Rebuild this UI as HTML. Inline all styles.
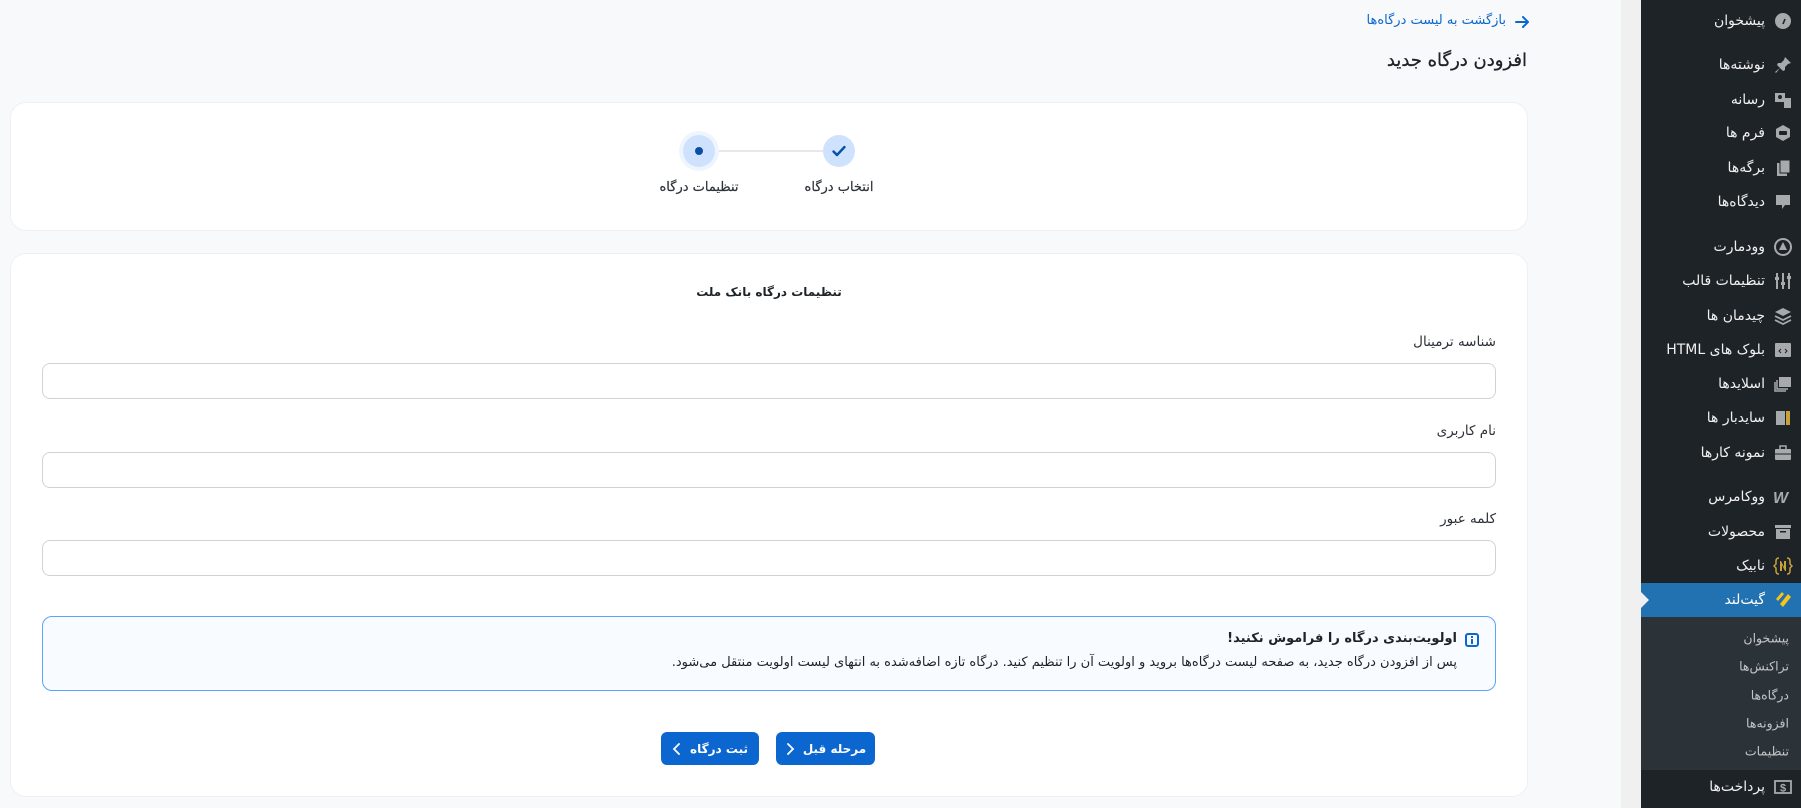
<!DOCTYPE html>
<html><head><meta charset="utf-8">
<style>
*{box-sizing:border-box;margin:0;padding:0}
body{width:1801px;height:808px;overflow:hidden;background:#f8f9fb;font-family:"DejaVu Sans","Liberation Sans",sans-serif;position:relative}
.a{position:absolute}
.r{direction:rtl;white-space:nowrap}
.card{position:absolute;left:10px;width:1518px;background:#fff;border:1px solid #eef0f3;border-radius:16px}
.inp{position:absolute;left:42px;width:1454px;height:36px;border:1px solid #cfd3d9;border-radius:8px;background:#fff}
.lbl{position:absolute;right:305px;font-size:13.5px;color:#2d3138;direction:rtl}
.side{position:absolute;left:1641px;top:0;width:160px;height:808px;background:#1d2327}
.it{position:absolute;right:36px;font-size:14px;color:#f0f0f1;direction:rtl;white-space:nowrap;transform:translateY(-50%)}
.ic{position:absolute;left:132px;width:20px;height:20px;transform:translateY(-50%)}
.sub{position:absolute;right:12px;font-size:12.5px;color:#c3c4c7;direction:rtl;white-space:nowrap;transform:translateY(-50%)}
.btn{position:absolute;top:732px;height:33px;background:#0b66d0;border-radius:6px;color:#fff;font-size:12px;font-weight:bold;display:flex;align-items:center;justify-content:center;gap:8px;direction:rtl}
</style></head><body>
<div class="a" style="left:1621px;top:0;width:20px;height:808px;background:#f0f0f1"></div>

<div class="a r" style="right:295px;top:13px;font-size:13px;color:#0b66d0">بازگشت به لیست درگاه‌ها</div>
<svg class="a" style="left:1514px;top:14px" width="16" height="16" viewBox="0 0 16 16"><path d="M2 8h12M9 3l5 5-5 5" stroke="#0b66d0" stroke-width="2" fill="none" stroke-linecap="round" stroke-linejoin="round"/></svg>
<div class="a r" style="right:274px;top:50px;font-size:18px;color:#1d2327;-webkit-text-stroke:0.3px #1d2327">افزودن درگاه جدید</div>

<div class="card" style="top:102px;height:129px"></div>
<div class="a" style="left:715px;top:150px;width:108px;height:2px;background:#e6e8ec"></div>
<div class="a" style="left:823px;top:135px;width:32px;height:32px;border-radius:50%;background:#cfe2fd"></div>
<svg class="a" style="left:831px;top:143px" width="16" height="16" viewBox="0 0 16 16"><path d="M2.5 8.5l3.5 3.5 7.5-8" stroke="#0a4fa3" stroke-width="2.4" fill="none" stroke-linecap="round" stroke-linejoin="round"/></svg>
<div class="a" style="left:679px;top:131px;width:40px;height:40px;border-radius:50%;background:#eef5ff"></div>
<div class="a" style="left:683px;top:135px;width:32px;height:32px;border-radius:50%;background:#cfe2fd"></div>
<div class="a" style="left:695px;top:147px;width:8px;height:8px;border-radius:50%;background:#0a4fa3"></div>
<div class="a r" style="left:779px;width:120px;text-align:center;top:180px;font-size:13px;color:#2d3138;-webkit-text-stroke:0.2px #2d3138">انتخاب درگاه</div>
<div class="a r" style="left:639px;width:120px;text-align:center;top:180px;font-size:13px;color:#2d3138;-webkit-text-stroke:0.2px #2d3138">تنظیمات درگاه</div>

<div class="card" style="top:253px;height:544px"></div>
<div class="a r" style="left:669px;width:200px;text-align:center;top:285px;font-size:12px;font-weight:bold;color:#1d2327">تنظیمات درگاه بانک ملت</div>
<div class="lbl" style="top:334px">شناسه ترمینال</div>
<div class="inp" style="top:363px"></div>
<div class="lbl" style="top:423px">نام کاربری</div>
<div class="inp" style="top:452px"></div>
<div class="lbl" style="top:511px">کلمه عبور</div>
<div class="inp" style="top:540px"></div>

<div class="a" style="left:42px;top:616px;width:1454px;height:75px;background:#f8fbff;border:1px solid #5ea3f5;border-radius:10px"></div>
<div class="a r" style="right:344px;top:631px;font-size:13px;font-weight:bold;color:#1d2327">اولویت‌بندی درگاه را فراموش نکنید!</div>
<div class="a r" style="right:344px;top:655px;font-size:13px;color:#1d2327">پس از افزودن درگاه جدید، به صفحه لیست درگاه‌ها بروید و اولویت آن را تنظیم کنید. درگاه تازه اضافه‌شده به انتهای لیست اولویت منتقل می‌شود.</div>
<div class="a" style="left:1465px;top:633px;width:14px;height:14px;border:2px solid #0b66d0;border-radius:3px"></div>
<div class="a" style="left:1471px;top:636px;width:2px;height:2px;background:#0b66d0"></div>
<div class="a" style="left:1471px;top:639px;width:2px;height:5px;background:#0b66d0"></div>

<div class="btn" style="left:776px;width:99px">
<svg width="10" height="12" viewBox="0 0 10 12" style="order:2"><path d="M3 1l5 5-5 5" stroke="#fff" stroke-width="1.8" fill="none" stroke-linecap="round"/></svg>
<span>مرحله قبل</span></div>
<div class="btn" style="left:661px;width:98px">
<span>ثبت درگاه</span>
<svg width="10" height="12" viewBox="0 0 10 12"><path d="M7 1L2 6l5 5" stroke="#fff" stroke-width="1.8" fill="none" stroke-linecap="round"/></svg></div>

<div class="side">
<div class="it" style="top:21px">پیشخوان</div>
<div class="it" style="top:65px">نوشته‌ها</div>
<div class="it" style="top:100px">رسانه</div>
<div class="it" style="top:133px">فرم ها</div>
<div class="it" style="top:168px">برگه‌ها</div>
<div class="it" style="top:202px">دیدگاه‌ها</div>
<div class="it" style="top:247px">وودمارت</div>
<div class="it" style="top:281px">تنظیمات قالب</div>
<div class="it" style="top:316px">چیدمان ها</div>
<div class="it" style="top:350px">بلوک های HTML</div>
<div class="it" style="top:384px">اسلایدها</div>
<div class="it" style="top:418px">سایدبار ها</div>
<div class="it" style="top:453px">نمونه کارها</div>
<div class="it" style="top:497px">ووکامرس</div>
<div class="it" style="top:532px">محصولات</div>
<div class="it" style="top:566px">نابیک</div>
<div class="a" style="left:0;top:583px;width:160px;height:34px;background:#2271b1"></div>
<div class="a" style="left:0;top:592px;width:0;height:0;border-top:8px solid transparent;border-bottom:8px solid transparent;border-left:8px solid #f0f0f1"></div>
<div class="it" style="top:600px;color:#fff">گیت‌لند</div>
<div class="a" style="left:0;top:617px;width:160px;height:153px;background:#2c3338"></div>
<div class="sub" style="top:638px">پیشخوان</div>
<div class="sub" style="top:666px">تراکنش‌ها</div>
<div class="sub" style="top:695px">درگاه‌ها</div>
<div class="sub" style="top:723px">افزونه‌ها</div>
<div class="sub" style="top:751px">تنظیمات</div>
<div class="it" style="top:787px">پرداخت‌ها</div>

<svg class="ic" style="top:21px" viewBox="0 0 20 20"><circle cx="10" cy="10" r="8" fill="#a7aaad"/><path d="M10 13l2-5" stroke="#1d2327" stroke-width="1.6"/></svg>
<svg class="ic" style="top:65px" viewBox="0 0 20 20"><path d="M12 2l6 6-3 1-3 3 0 3-2 1-3-3-4 5-1-1 5-4-3-3 1-2 3 0 3-3z" fill="#a7aaad"/></svg>
<svg class="ic" style="top:100px" viewBox="0 0 20 20"><rect x="2" y="3" width="10" height="9" fill="#a7aaad"/><rect x="11" y="8" width="7" height="10" fill="#a7aaad"/><circle cx="7" cy="7" r="2" fill="#1d2327"/></svg>
<svg class="ic" style="top:133px" viewBox="0 0 20 20"><path d="M10 2l7 4v8l-7 4-7-4V6z" fill="#a7aaad"/><rect x="6" y="8" width="8" height="4" rx="1" fill="#1d2327"/></svg>
<svg class="ic" style="top:168px" viewBox="0 0 20 20"><rect x="4" y="5" width="10" height="13" fill="#a7aaad"/><rect x="7" y="2" width="10" height="13" fill="#a7aaad" stroke="#1d2327"/></svg>
<svg class="ic" style="top:202px" viewBox="0 0 20 20"><path d="M3 3h14v10h-5l-3 4v-4H3z" fill="#a7aaad"/></svg>
<svg class="ic" style="top:247px" viewBox="0 0 20 20"><circle cx="10" cy="10" r="8" fill="none" stroke="#a7aaad" stroke-width="2"/><path d="M10 5l4 8H6z" fill="#a7aaad"/></svg>
<svg class="ic" style="top:281px" viewBox="0 0 20 20"><path d="M4 2v16M10 2v16M16 2v16" stroke="#a7aaad" stroke-width="2"/><rect x="2" y="6" width="4" height="3" fill="#a7aaad"/><rect x="8" y="11" width="4" height="3" fill="#a7aaad"/><rect x="14" y="5" width="4" height="3" fill="#a7aaad"/></svg>
<svg class="ic" style="top:316px" viewBox="0 0 20 20"><path d="M10 2l8 4-8 4-8-4z" fill="#a7aaad"/><path d="M2 10l8 4 8-4M2 14l8 4 8-4" stroke="#a7aaad" stroke-width="1.8" fill="none"/></svg>
<svg class="ic" style="top:350px" viewBox="0 0 20 20"><rect x="2" y="3" width="16" height="14" rx="1" fill="#a7aaad"/><path d="M8 9l-2 2 2 2M12 9l2 2-2 2" stroke="#1d2327" fill="none"/></svg>
<svg class="ic" style="top:384px" viewBox="0 0 20 20"><rect x="6" y="3" width="12" height="10" fill="#a7aaad"/><path d="M4 6v9h11M2 8v9h11" stroke="#a7aaad" stroke-width="1.5" fill="none"/></svg>
<svg class="ic" style="top:418px" viewBox="0 0 20 20"><rect x="3" y="3" width="9" height="14" fill="#a7aaad"/><rect x="13" y="3" width="4" height="14" fill="#c9a23a"/></svg>
<svg class="ic" style="top:453px" viewBox="0 0 20 20"><rect x="2" y="6" width="16" height="11" rx="1" fill="#a7aaad"/><rect x="7" y="3" width="6" height="4" fill="none" stroke="#a7aaad" stroke-width="1.5"/><path d="M2 11h16" stroke="#1d2327"/></svg>
<svg class="ic" style="top:497px" viewBox="0 0 20 20"><text x="0" y="16" font-family="Liberation Sans" font-weight="bold" font-style="italic" font-size="16" fill="#a7aaad">W</text></svg>
<svg class="ic" style="top:532px" viewBox="0 0 20 20"><rect x="2" y="3" width="16" height="3" fill="#a7aaad"/><rect x="3" y="7" width="14" height="10" fill="#a7aaad"/><rect x="7" y="9" width="6" height="1.5" fill="#1d2327"/></svg>
<svg class="ic" style="top:566px" viewBox="0 0 20 20"><path d="M6 2Q3 2 3 5v3l-2 2 2 2v3q0 3 3 3M14 2q3 0 3 3v3l2 2-2 2v3q0 3-3 3" stroke="#c9a23a" stroke-width="1.5" fill="none"/><path d="M7 5v10h2V9l3 6h1V5h-2v6L8 5z" fill="#c9a23a"/></svg>
<svg class="ic" style="top:600px" viewBox="0 0 20 20"><path d="M3 9l6-7 2 2-6 7zM7 14l8-10 3 3-8 10z" fill="#f5c518"/></svg>
<svg class="ic" style="top:787px" viewBox="0 0 20 20"><rect x="2" y="4" width="16" height="12" fill="none" stroke="#a7aaad" stroke-width="1.8"/><text x="10" y="14.5" text-anchor="middle" font-family="Liberation Sans" font-weight="bold" font-size="11" fill="#a7aaad">$</text></svg>
</div>
</body></html>
